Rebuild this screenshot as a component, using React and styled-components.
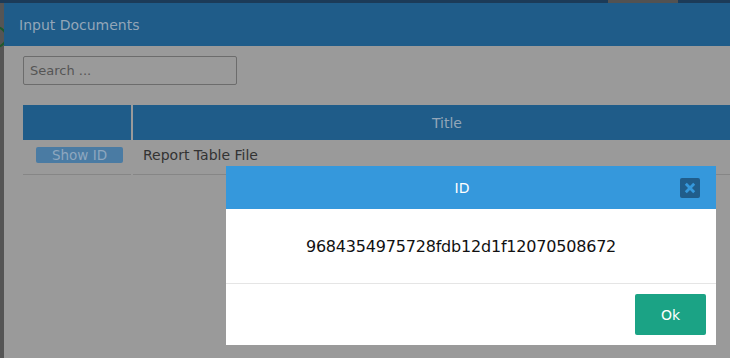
import React from 'react';
import styled, { createGlobalStyle } from 'styled-components';

const GlobalStyle = createGlobalStyle`
  html, body {
    margin: 0;
    padding: 0;
    background: #555555;
    font-family: "DejaVu Sans", "Liberation Sans", sans-serif;
    overflow: hidden;
  }
`;

const Page = styled.div`
  position: relative;
  width: 730px;
  height: 358px;
  overflow: hidden;
  background: #555555;
`;

const TopStrip = styled.div`
  height: 3px;
  background: #1c3b58;
  display: flex;
  justify-content: flex-end;
  padding-right: 52px;
`;

const StripBlock = styled.div`
  width: 70px;
  background: #525252;
`;

const Workspace = styled.div`
  display: flex;
  height: 355px;
`;

// bit of the page behind the dialog
const Gutter = styled.div`
  flex: none;
  width: 4px;
  overflow: hidden;
  padding-top: 23px;
`;

const Ring = styled.div`
  width: 18px;
  height: 18px;
  margin-left: -15px;
  border: 2px solid #1d5a2c;
  border-radius: 50%;
`;

const Dialog = styled.div`
  flex: none;
  width: 780px;
  display: flex;
  flex-direction: column;
`;

const DialogHeader = styled.div`
  height: 43px;
  display: flex;
  align-items: center;
  padding-left: 15px;
  background: #1f5c89;
  color: #93a6b8;
  font-size: 14px;
`;

const DialogBody = styled.div`
  flex: 1;
  background: #9a9a9a;
  padding: 10px 19px;
`;

const SearchInput = styled.input`
  box-sizing: border-box;
  width: 214px;
  height: 29px;
  padding: 0 6px;
  border: 1px solid #6c6c6c;
  border-radius: 2px;
  background: transparent;
  font-family: inherit;
  font-size: 13px;
  color: #333;
  outline: none;

  &::placeholder {
    color: #555555;
  }
`;

const Grid = styled.div`
  margin-top: 20px;
  width: 738px;
  display: grid;
  grid-template-columns: 108px 1fr;
  column-gap: 2px;
`;

const HeadCell = styled.div`
  height: 35px;
  background: #1f5c89;
  color: #93a6b8;
  font-size: 14px;
  display: flex;
  align-items: center;
  justify-content: center;
`;

const Cell = styled.div`
  box-sizing: border-box;
  height: 35px;
  padding-bottom: 4px;
  padding-left: ${(p) => (p.center ? '5px' : '10px')};
  border-bottom: 1px solid #868686;
  display: flex;
  align-items: center;
  justify-content: ${(p) => (p.center ? 'center' : 'flex-start')};
  font-size: 14px;
  color: #333333;
`;

const ShowIdButton = styled.button`
  width: 87px;
  height: 16px;
  padding: 0;
  border: none;
  border-radius: 2px;
  background: #4a7ba3;
  color: #8ea7bf;
  font-family: inherit;
  font-size: 13.5px;
  line-height: 16px;
`;

const Modal = styled.div`
  position: absolute;
  left: 226px;
  top: 166px;
  width: 490px;
  background: #ffffff;
`;

const ModalHeader = styled.div`
  height: 43px;
  display: grid;
  grid-template-columns: 1fr auto 1fr;
  align-items: center;
  background: #3598dc;
  color: #ffffff;
  font-size: 14px;
`;

const ModalTitle = styled.div`
  grid-column: 2;
  margin-right: 18px;
`;

const CloseButton = styled.button`
  grid-column: 3;
  justify-self: end;
  margin-right: 16px;
  width: 20px;
  height: 20px;
  padding: 0;
  border: none;
  border-radius: 2px;
  background: #205d8b;
  display: flex;
  align-items: center;
  justify-content: center;
`;

const ModalBody = styled.div`
  height: 74px;
  display: flex;
  align-items: center;
  justify-content: center;
  padding-right: 20px;
  font-size: 16px;
  letter-spacing: -0.2px;
  color: #111111;
`;

const ModalFooter = styled.div`
  border-top: 1px solid #e5e5e5;
  padding: 10px;
  display: flex;
  justify-content: flex-end;
`;

const OkButton = styled.button`
  width: 71px;
  height: 41px;
  border: none;
  border-radius: 2px;
  background: #1ba385;
  color: #ffffff;
  font-family: inherit;
  font-size: 14px;
`;

export default function App() {
  return (
    <Page>
      <GlobalStyle />
      <TopStrip>
        <StripBlock />
      </TopStrip>
      <Workspace>
        <Gutter>
          <Ring />
        </Gutter>
        <Dialog>
          <DialogHeader>Input Documents</DialogHeader>
          <DialogBody>
            <SearchInput placeholder="Search ..." />
            <Grid>
              <HeadCell />
              <HeadCell>Title</HeadCell>
              <Cell center>
                <ShowIdButton>Show ID</ShowIdButton>
              </Cell>
              <Cell>Report Table File</Cell>
            </Grid>
          </DialogBody>
        </Dialog>
      </Workspace>

      <Modal>
        <ModalHeader>
          <ModalTitle>ID</ModalTitle>
          <CloseButton>
            <svg width="12" height="12" viewBox="0 0 12 12">
              <path d="M1.8 1.8 L10.2 10.2 M10.2 1.8 L1.8 10.2" stroke="#3598dc" strokeWidth="2.8" />
            </svg>
          </CloseButton>
        </ModalHeader>
        <ModalBody>9684354975728fdb12d1f12070508672</ModalBody>
        <ModalFooter>
          <OkButton>Ok</OkButton>
        </ModalFooter>
      </Modal>
    </Page>
  );
}
